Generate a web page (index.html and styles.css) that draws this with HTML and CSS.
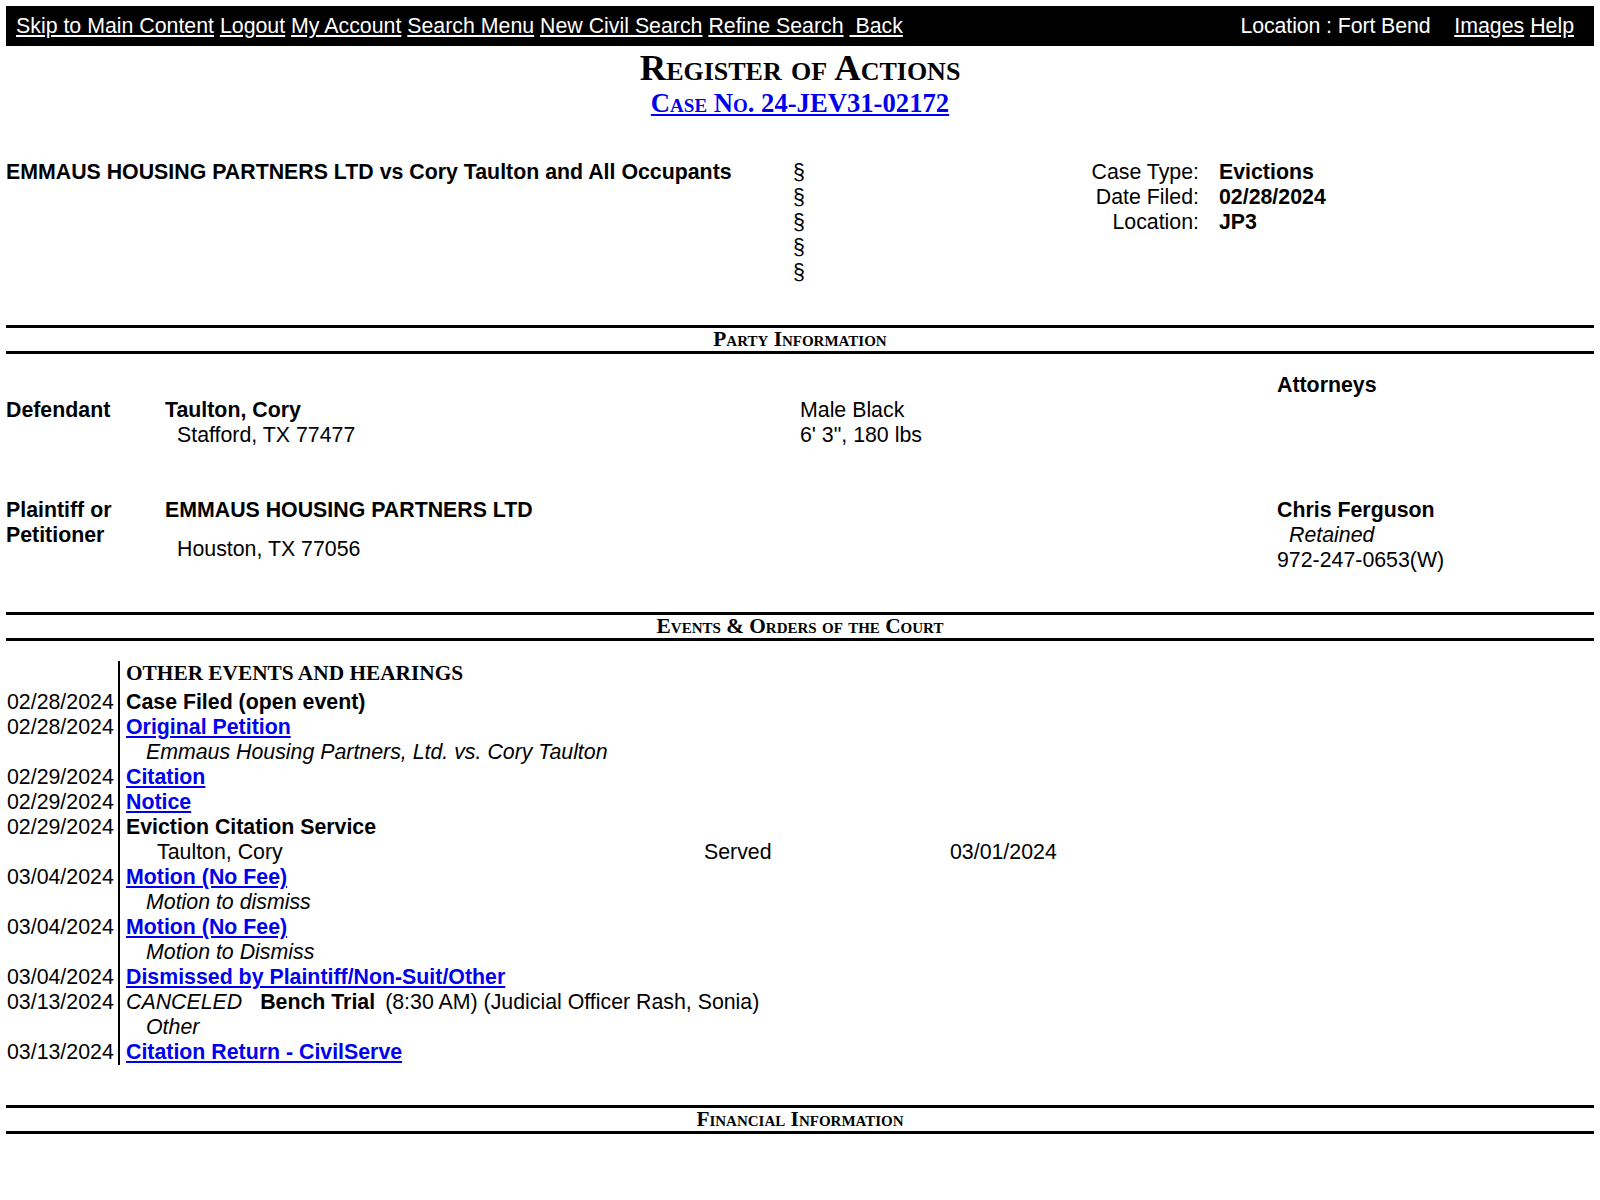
FILE: index.html
```html
<!DOCTYPE html>
<html lang="en">
<head>
<meta charset="utf-8">
<title>Register of Actions - 24-JEV31-02172</title>
<link rel="stylesheet" href="styles.css">
</head>
<body>
<div class="topbar">
  <div class="nav-left"><a href="#">Skip to Main Content</a> <a href="#">Logout</a> <a href="#">My Account</a> <a href="#">Search Menu</a> <a href="#">New Civil Search</a> <a href="#">Refine Search</a> <a href="#">&nbsp;Back</a></div>
  <div class="nav-right"><span>Location : Fort Bend</span>&nbsp;&nbsp;&nbsp; <a href="#">Images</a> <a href="#">Help</a></div>
</div>

<div class="page-title">Register of Actions</div>
<div class="case-no"><a href="#">Case No. 24-JEV31-02172</a></div>

<div class="case-head">
  <div class="case-style">EMMAUS HOUSING PARTNERS LTD vs Cory Taulton and All Occupants</div>
  <div class="sect-col">§<br>§<br>§<br>§<br>§</div>
  <div class="case-meta">
    <div class="meta-label">Case Type:</div><div class="meta-value">Evictions</div>
    <div class="meta-label">Date Filed:</div><div class="meta-value">02/28/2024</div>
    <div class="meta-label">Location:</div><div class="meta-value">JP3</div>
  </div>
</div>

<div class="section-title">Party Information</div>

<div class="party">
  <div class="party-row">
    <div></div><div></div><div></div>
    <div class="bold">Attorneys</div>
  </div>
  <div class="party-row">
    <div class="bold">Defendant</div>
    <div>
      <div class="bold">Taulton, Cory</div>
      <div class="addr">Stafford, TX 77477</div>
    </div>
    <div>
      <div>Male Black</div>
      <div>6' 3", 180 lbs</div>
    </div>
    <div></div>
  </div>
  <div class="party-row plaintiff">
    <div class="bold label-wrap">Plaintiff or Petitioner</div>
    <div>
      <div class="bold">EMMAUS HOUSING PARTNERS LTD</div>
      <div class="addr addr-gap">Houston, TX 77056</div>
    </div>
    <div></div>
    <div>
      <div class="bold">Chris Ferguson</div>
      <div class="retained">Retained</div>
      <div>972-247-0653(W)</div>
    </div>
  </div>
</div>

<div class="section-title events-title">Events &amp; Orders of the Court</div>

<div class="events">
  <div class="date-cell head-cell"></div><div class="ev-cell ev-head">OTHER EVENTS AND HEARINGS</div>

  <div class="date-cell">02/28/2024</div><div class="ev-cell bold">Case Filed (open event)</div>

  <div class="date-cell">02/28/2024</div><div class="ev-cell"><a href="#" class="ev-link">Original Petition</a></div>
  <div class="date-cell"></div><div class="ev-cell ev-note">Emmaus Housing Partners, Ltd. vs. Cory Taulton</div>

  <div class="date-cell">02/29/2024</div><div class="ev-cell"><a href="#" class="ev-link">Citation</a></div>

  <div class="date-cell">02/29/2024</div><div class="ev-cell"><a href="#" class="ev-link">Notice</a></div>

  <div class="date-cell">02/29/2024</div><div class="ev-cell bold">Eviction Citation Service</div>
  <div class="date-cell"></div>
  <div class="ev-cell service">
    <span>Taulton, Cory</span><span>Served</span><span>03/01/2024</span>
  </div>

  <div class="date-cell">03/04/2024</div><div class="ev-cell"><a href="#" class="ev-link">Motion (No Fee)</a></div>
  <div class="date-cell"></div><div class="ev-cell ev-note">Motion to dismiss</div>

  <div class="date-cell">03/04/2024</div><div class="ev-cell"><a href="#" class="ev-link">Motion (No Fee)</a></div>
  <div class="date-cell"></div><div class="ev-cell ev-note">Motion to Dismiss</div>

  <div class="date-cell">03/04/2024</div><div class="ev-cell"><a href="#" class="ev-link">Dismissed by Plaintiff/Non-Suit/Other</a></div>

  <div class="date-cell">03/13/2024</div>
  <div class="ev-cell"><span class="ital">CANCELED</span><span class="bench bold">Bench Trial</span><span class="hearing">(8:30 AM) (Judicial Officer Rash, Sonia)</span></div>
  <div class="date-cell"></div><div class="ev-cell ev-note">Other</div>

  <div class="date-cell">03/13/2024</div><div class="ev-cell"><a href="#" class="ev-link">Citation Return - CivilServe</a></div>
</div>

<div class="section-title">Financial Information</div>
</body>
</html>
```

FILE: styles.css
```css
html, body {
  background: #fff;
}

body {
  margin: 6px;
  font-family: "Liberation Sans", Arial, sans-serif;
  font-size: 21.33px;
  line-height: 25px;
  color: #000;
}

a {
  color: #0000ee;
}

.bold {
  font-weight: bold;
}

.ital {
  font-style: italic;
}

/* Top navigation bar */
.topbar {
  background: #000;
  color: #fff;
  height: 40px;
  display: flex;
  justify-content: space-between;
  align-items: center;
  padding: 0 20px 0 10px;
  white-space: pre;
  line-height: 40px;
}

.topbar a {
  color: #fff;
  text-decoration: underline;
}

.nav-right span {
  letter-spacing: -0.1px;
}

/* Titles */
.page-title {
  text-align: center;
  font-family: "Liberation Serif", "Times New Roman", serif;
  font-weight: bold;
  font-variant: small-caps;
  font-size: 36.7px;
  line-height: 43px;
}

.case-no {
  text-align: center;
  font-family: "Liberation Serif", "Times New Roman", serif;
  font-weight: bold;
  font-variant: small-caps;
  font-size: 26.67px;
  line-height: 29px;
}

.case-no a {
  color: #0000ee;
}

/* Case header */
.case-head {
  display: grid;
  grid-template-columns: 787px 12px 1fr;
  margin-top: 42px;
}

.case-style {
  font-weight: bold;
}

.case-meta {
  display: grid;
  grid-template-columns: 394px auto;
  column-gap: 20px;
  align-content: start;
}

.meta-label {
  text-align: right;
}

.meta-value {
  font-weight: bold;
}

/* Section titles */
.section-title {
  margin-top: 40px;
  border-top: 3px solid #000;
  border-bottom: 3px solid #000;
  text-align: center;
  font-family: "Liberation Serif", "Times New Roman", serif;
  font-weight: bold;
  font-variant: small-caps;
  font-size: 21.33px;
  line-height: 23px;
}

.section-title.events-title {
  margin-top: 39px;
}

/* Party information */
.party {
  margin-top: 19px;
}

.party-row {
  display: grid;
  grid-template-columns: 159px 635px 477px 1fr;
}

.party-row.plaintiff {
  margin-top: 50px;
}

.label-wrap {
  padding-right: 20px;
}

.addr {
  padding-left: 12px;
}

.addr-gap {
  margin-top: 14px;
}

.retained {
  font-style: italic;
  padding-left: 12px;
}

/* Events */
.events {
  margin-top: 20px;
  display: grid;
  grid-template-columns: 114px 1fr;
}

.date-cell {
  box-sizing: border-box;
  border-right: 2px solid #000;
  padding-left: 1px;
  white-space: nowrap;
}

.ev-cell {
  padding-left: 6px;
}

.ev-head {
  font-family: "Liberation Serif", "Times New Roman", serif;
  font-weight: bold;
  line-height: 24px;
  padding-bottom: 5px;
}

.ev-link {
  font-weight: bold;
}

.ev-note {
  font-style: italic;
  padding-left: 26px;
}

.service {
  display: grid;
  grid-template-columns: 547px 246px auto;
  padding-left: 37px;
}

.bench {
  margin-left: 18px;
}

.hearing {
  margin-left: 10px;
}
```
